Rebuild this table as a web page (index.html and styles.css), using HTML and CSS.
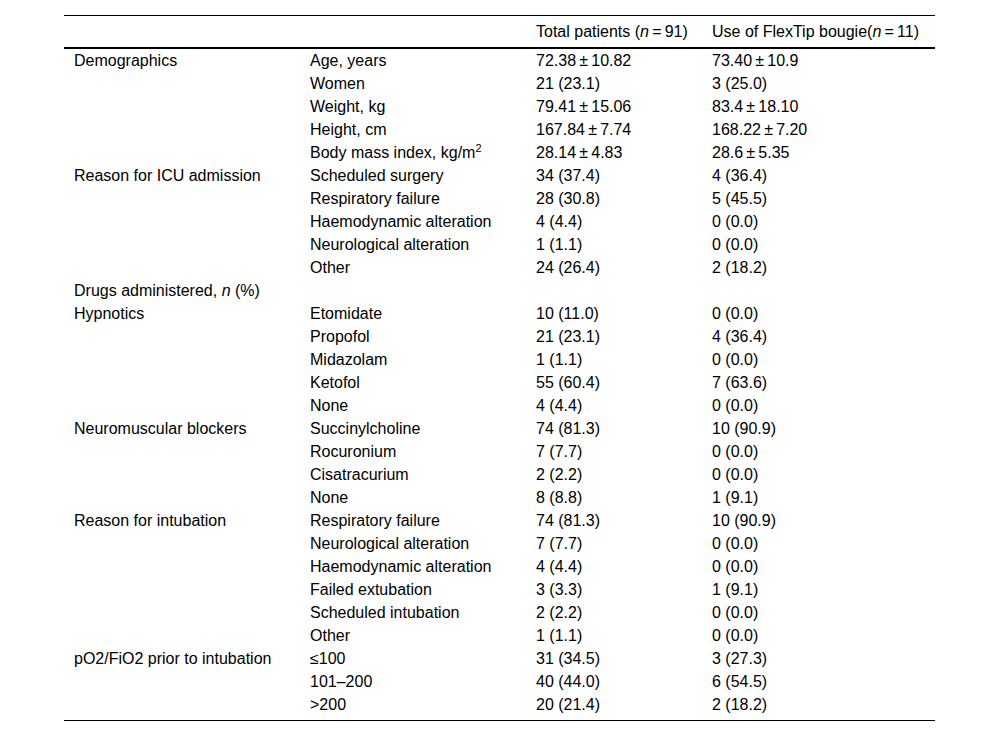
FILE: index.html
```html
<!DOCTYPE html>
<html lang="en">
<head>
<meta charset="utf-8">
<title>Patient characteristics</title>
<link rel="stylesheet" href="styles.css">
</head>
<body>
<table class="data">
  <colgroup>
    <col class="c1"><col class="c2"><col class="c3"><col class="c4">
  </colgroup>
  <thead>
    <tr>
      <th></th>
      <th></th>
      <th>Total patients (<i>n</i>&#8201;=&#8201;91)</th>
      <th>Use of FlexTip bougie(<i>n</i>&#8201;=&#8201;11)</th>
    </tr>
  </thead>
  <tbody>
    <tr><td>Demographics</td><td>Age, years</td><td>72.38&#8201;±&#8201;10.82</td><td>73.40&#8201;±&#8201;10.9</td></tr>
    <tr><td></td><td>Women</td><td>21 (23.1)</td><td>3 (25.0)</td></tr>
    <tr><td></td><td>Weight, kg</td><td>79.41&#8201;±&#8201;15.06</td><td>83.4&#8201;±&#8201;18.10</td></tr>
    <tr><td></td><td>Height, cm</td><td>167.84&#8201;±&#8201;7.74</td><td>168.22&#8201;±&#8201;7.20</td></tr>
    <tr><td></td><td>Body mass index, kg/m<sup>2</sup></td><td>28.14&#8201;±&#8201;4.83</td><td>28.6&#8201;±&#8201;5.35</td></tr>
    <tr><td>Reason for ICU admission</td><td>Scheduled surgery</td><td>34 (37.4)</td><td>4 (36.4)</td></tr>
    <tr><td></td><td>Respiratory failure</td><td>28 (30.8)</td><td>5 (45.5)</td></tr>
    <tr><td></td><td>Haemodynamic alteration</td><td>4 (4.4)</td><td>0 (0.0)</td></tr>
    <tr><td></td><td>Neurological alteration</td><td>1 (1.1)</td><td>0 (0.0)</td></tr>
    <tr><td></td><td>Other</td><td>24 (26.4)</td><td>2 (18.2)</td></tr>
    <tr><td>Drugs administered, <i>n</i> (%)</td><td></td><td></td><td></td></tr>
    <tr><td>Hypnotics</td><td>Etomidate</td><td>10 (11.0)</td><td>0 (0.0)</td></tr>
    <tr><td></td><td>Propofol</td><td>21 (23.1)</td><td>4 (36.4)</td></tr>
    <tr><td></td><td>Midazolam</td><td>1 (1.1)</td><td>0 (0.0)</td></tr>
    <tr><td></td><td>Ketofol</td><td>55 (60.4)</td><td>7 (63.6)</td></tr>
    <tr><td></td><td>None</td><td>4 (4.4)</td><td>0 (0.0)</td></tr>
    <tr><td>Neuromuscular blockers</td><td>Succinylcholine</td><td>74 (81.3)</td><td>10 (90.9)</td></tr>
    <tr><td></td><td>Rocuronium</td><td>7 (7.7)</td><td>0 (0.0)</td></tr>
    <tr><td></td><td>Cisatracurium</td><td>2 (2.2)</td><td>0 (0.0)</td></tr>
    <tr><td></td><td>None</td><td>8 (8.8)</td><td>1 (9.1)</td></tr>
    <tr><td>Reason for intubation</td><td>Respiratory failure</td><td>74 (81.3)</td><td>10 (90.9)</td></tr>
    <tr><td></td><td>Neurological alteration</td><td>7 (7.7)</td><td>0 (0.0)</td></tr>
    <tr><td></td><td>Haemodynamic alteration</td><td>4 (4.4)</td><td>0 (0.0)</td></tr>
    <tr><td></td><td>Failed extubation</td><td>3 (3.3)</td><td>1 (9.1)</td></tr>
    <tr><td></td><td>Scheduled intubation</td><td>2 (2.2)</td><td>0 (0.0)</td></tr>
    <tr><td></td><td>Other</td><td>1 (1.1)</td><td>0 (0.0)</td></tr>
    <tr><td>pO2/FiO2 prior to intubation</td><td>≤100</td><td>31 (34.5)</td><td>3 (27.3)</td></tr>
    <tr><td></td><td>101–200</td><td>40 (44.0)</td><td>6 (54.5)</td></tr>
    <tr class="last"><td></td><td>&gt;200</td><td>20 (21.4)</td><td>2 (18.2)</td></tr>
  </tbody>
</table>
</body>
</html>
```

FILE: styles.css
```css
html, body {
  margin: 0;
  padding: 0;
  background: #fff;
}

body {
  padding: 15px 0 0 64px;
  font-family: "Liberation Sans", Arial, sans-serif;
  font-size: 16px;
  color: #000;
}

.data {
  border-collapse: collapse;
  table-layout: fixed;
  width: 871px;
  border-top: 1px solid #000;
  border-bottom: 1px solid #000;
}

.c1 { width: 236px; }
.c2 { width: 226px; }
.c3 { width: 176px; }
.c4 { width: 233px; }

.data th,
.data td {
  padding: 0 0 0 10px;
  text-align: left;
  font-weight: normal;
  vertical-align: middle;
  white-space: nowrap;
  height: 23px;
  line-height: 23px;
}

.data thead th {
  height: 31px;
  line-height: 31px;
  border-bottom: 2px solid #000;
}

.data sup {
  font-size: 11px;
  line-height: 0;
  vertical-align: 6px;
}

.data tr.last td {
  padding-bottom: 4px;
}
```
